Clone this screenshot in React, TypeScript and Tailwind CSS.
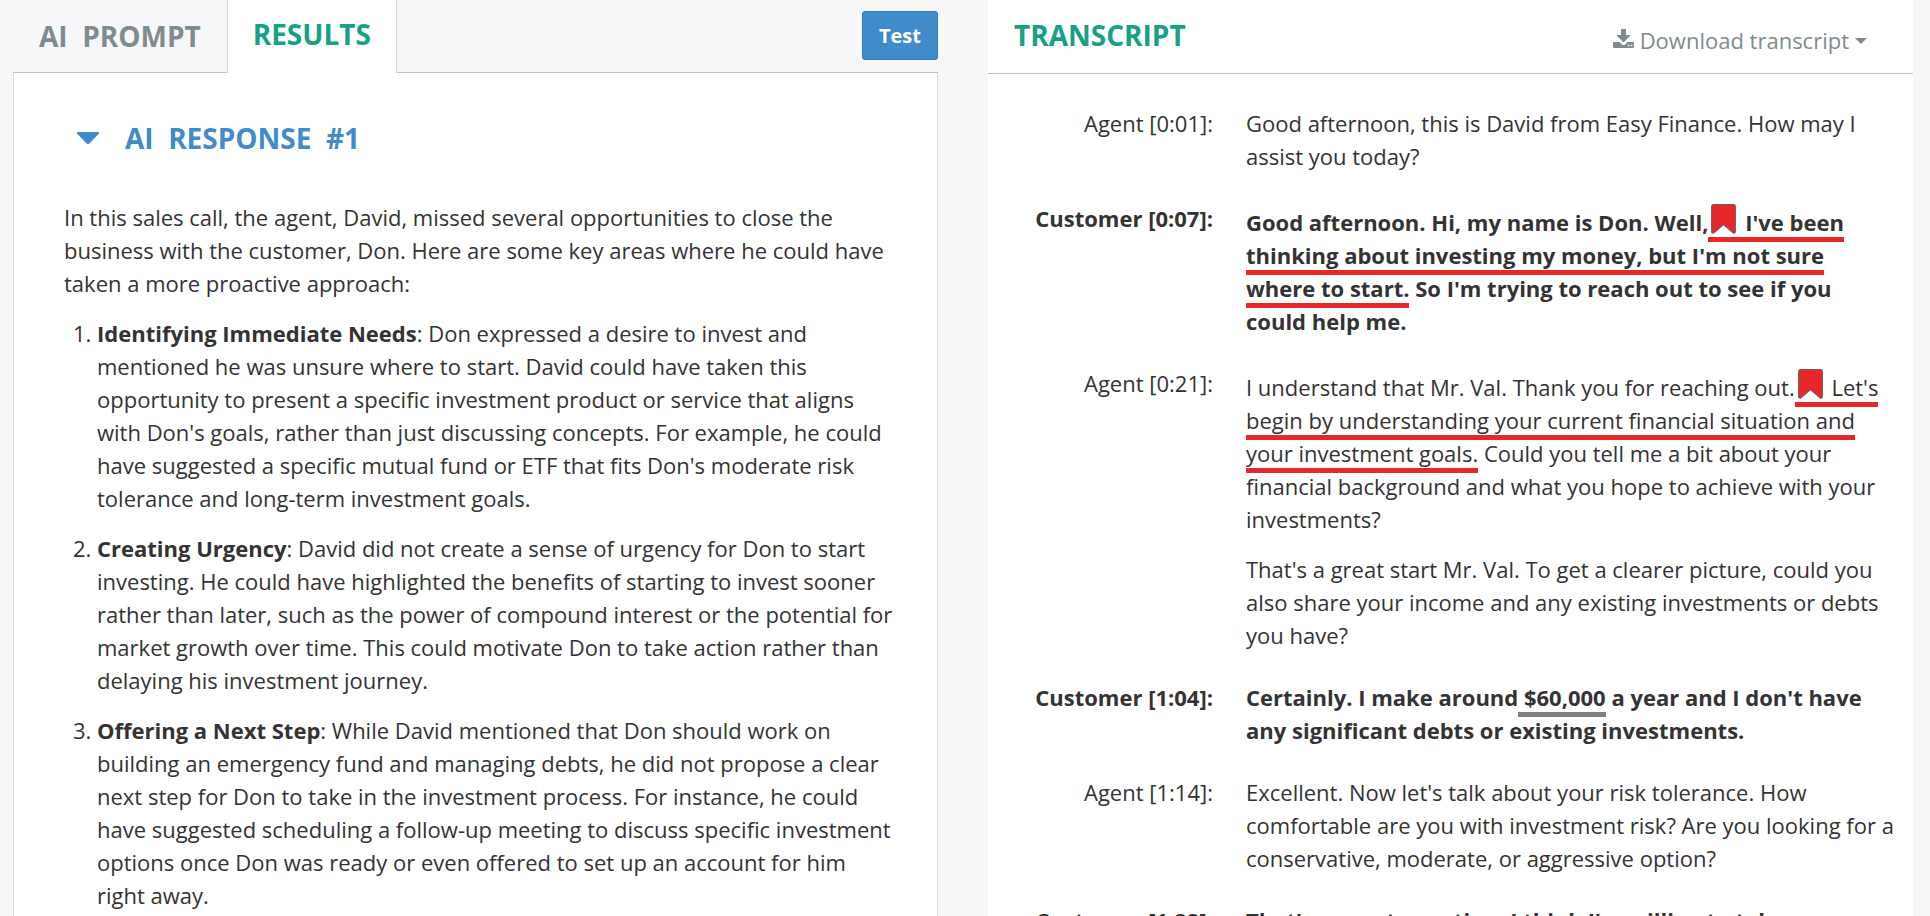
import React from 'react';
import clsx from 'clsx';

const suggestions = [
  {
    title: "Identifying Immediate Needs",
    body: "Don expressed a desire to invest and mentioned he was unsure where to start. David could have taken this opportunity to present a specific investment product or service that aligns with Don's goals, rather than just discussing concepts. For example, he could have suggested a specific mutual fund or ETF that fits Don's moderate risk tolerance and long-term investment goals."
  },
  {
    title: "Creating Urgency",
    body: "David did not create a sense of urgency for Don to start investing. He could have highlighted the benefits of starting to invest sooner rather than later, such as the power of compound interest or the potential for market growth over time. This could motivate Don to take action rather than delaying his investment journey."
  },
  {
    title: "Offering a Next Step",
    body: "While David mentioned that Don should work on building an emergency fund and managing debts, he did not propose a clear next step for Don to take in the investment process. For instance, he could have suggested scheduling a follow-up meeting to discuss specific investment options once Don was ready or even offered to set up an account for him right away."
  }
];

const Bookmark = () => (
  <svg viewBox="0 0 25 30" className="inline-block w-[25px] h-[30px] mt-0.5 mx-[3px] align-[-3px]" aria-hidden="true">
    <path
      d="M2.5 .7h20a1.8 1.8 0 0 1 1.8 1.8v25.2c0 1.4-1.3 1.8-2.2 1L12.5 20.5 2.9 28.7c-.9.8-2.2.4-2.2-1V2.5A1.8 1.8 0 0 1 2.5.7z"
      fill="#e62828"
      stroke="#8a5050"
      strokeWidth="1.2"
    />
  </svg>
);

const Flagged = ({ children }: { children: React.ReactNode }) => (
  <mark className="bg-transparent text-inherit border-b-[5px] border-[#e62828]">
    <Bookmark /> {children}
  </mark>
);

const messages = [
  {
    speaker: "Agent",
    time: "0:01",
    paragraphs: [<>Good afternoon, this is David from Easy Finance. How may I assist you today?</>]
  },
  {
    speaker: "Customer",
    time: "0:07",
    paragraphs: [
      <>
        Good afternoon. Hi, my name is Don. Well,<Flagged>I've been thinking about investing my money, but I'm not sure where to start.</Flagged> So I'm trying to reach out to see if you could help me.
      </>
    ]
  },
  {
    speaker: "Agent",
    time: "0:21",
    paragraphs: [
      <>
        I understand that Mr. Val. Thank you for reaching out.<Flagged>Let's begin by understanding your current financial situation and your investment goals.</Flagged> Could you tell me a bit about your financial background and what you hope to achieve with your investments?
      </>,
      <>That's a great start Mr. Val. To get a clearer picture, could you also share your income and any existing investments or debts you have?</>
    ]
  },
  {
    speaker: "Customer",
    time: "1:04",
    paragraphs: [
      <>
        Certainly. I make around<mark className="bg-transparent text-inherit border-b-[5px] border-[#808080]"> $60,000</mark> a year and I don't have any significant debts or existing investments.
      </>
    ]
  },
  {
    speaker: "Agent",
    time: "1:14",
    paragraphs: [
      <>Excellent. Now let's talk about your risk tolerance. How comfortable are you with investment risk? Are you looking for a conservative, moderate, or aggressive option?</>
    ]
  },
  {
    speaker: "Customer",
    time: "1:22",
    paragraphs: [<>That's a great question. I think I'm willing to take some moderate risks.</>]
  }
];

const ResultsPanel = () => (
  <section className="min-w-0 flex flex-col">
    {/* Tabs */}
    <div className="flex h-[73px] shrink-0">
      <div role="tablist" className="flex text-[28px] leading-9 font-bold">
        <button role="tab" aria-selected="false" className="px-[26px] border-b border-[#c0c2c4] text-[#7f8c8d]">
          AI&nbsp; PROMPT
        </button>
        <button role="tab" aria-selected="true" className="px-[25px] pb-1.5 bg-white border-x border-[#dcdcdc] text-[#16a085]">
          RESULTS
        </button>
      </div>
      <div className="flex-1 flex justify-end items-start pt-[11px] border-b border-[#c0c2c4]">
        <button className="h-[49px] px-4 rounded-[3px] bg-[#428bca] border border-[#357ebd] text-white text-xl font-bold">
          Test
        </button>
      </div>
    </div>

    {/* Response */}
    <div className="flex-1 bg-white border-x border-[#dcdcdc] pl-[50px] pr-[42px] pt-[45px]">
      <h2>
        <button aria-expanded="true" className="flex items-center gap-[26px] pl-[13px] text-[28px] leading-10 font-bold text-[#428bca]">
          <svg viewBox="0 0 22 12" className="w-[22px] h-3" fill="currentColor" aria-hidden="true">
            <path d="M1.2 0h19.6c1.1 0 1.6 1.3.8 2L12.6 11.200a2.200 2.200 0 0 1-3.200 0L.4 2C-.4 1.300.1 0 1.200 0z" />
          </svg>
          AI&nbsp; RESPONSE&nbsp; #1
        </button>
      </h2>
      <p className="mt-[43px]">
        In this sales call, the agent, David, missed several opportunities to close the business with the customer, Don. Here are some key areas where he could have taken a more proactive approach:
      </p>
      <ol className="list-decimal pl-[33px]">
        {suggestions.map((item) => (
          <li key={item.title} className="mt-[17px]">
            <strong>{item.title}</strong>: {item.body}
          </li>
        ))}
      </ol>
    </div>
  </section>
);

const TranscriptPanel = () => (
  <section className="min-w-0 bg-white">
    <header className="h-[74px] flex justify-between items-center pl-[26px] pr-[46px] border-b border-[#c0c2c4]">
      <h2 className="pb-1 text-[28px] leading-9 font-bold text-[#16a085]">TRANSCRIPT</h2>
      <button className="flex items-center pt-2 text-[#7f8c8d]">
        <svg viewBox="0 0 21 20" className="w-[21px] h-5 mr-1.5 mb-1" fill="currentColor" aria-hidden="true">
          <path d="M8 0h5v6h3.500c.6 0 .8.6.4 1l-5.700 5.700a1 1 0 0 1-1.400 0L4.100 7c-.4-.4-.2-1 .4-1H8z" />
          <path fillRule="evenodd" d="M1 13h5.500l2.200 2.200a2.600 2.600 0 0 0 3.600 0l2.200-2.200H20a1 1 0 0 1 1 1v4a1 1 0 0 1-1 1H1a1 1 0 0 1-1-1v-4a1 1 0 0 1 1-1zM15 15.800v1.500h1.500v-1.500zM18 15.800v1.500h1.500v-1.500z" />
        </svg>
        Download transcript
        <svg viewBox="0 0 12 6" className="w-3 h-1.5 ml-1.5" fill="currentColor" aria-hidden="true">
          <path d="M0 0h12L6 6z" />
        </svg>
      </button>
    </header>

    <dl className="pt-[33px] pr-[17px]">
      {messages.map((message) => (
        <div
          key={message.time}
          className={clsx("flex gap-[33px] mb-[29px]", message.speaker === "Customer" && "font-bold")}
        >
          <dt className="w-[225px] shrink-0 text-right">
            {message.speaker} [{message.time}]:
          </dt>
          <dd className="flex-1 min-w-0 space-y-[17px]">
            {message.paragraphs.map((paragraph, index) => (
              <p key={index}>{paragraph}</p>
            ))}
          </dd>
        </div>
      ))}
    </dl>
  </section>
);

const App = () => {
  return (
    <main
      className="h-screen overflow-hidden grid grid-cols-2 gap-[50px] pl-[13px] pr-[17px] bg-[#f7f7f9] text-[#333333] text-[22px] leading-[33px]"
      style={{ fontFamily: '"Open Sans", sans-serif' }}
    >
      <ResultsPanel />
      <TranscriptPanel />
    </main>
  );
};

export default App;
